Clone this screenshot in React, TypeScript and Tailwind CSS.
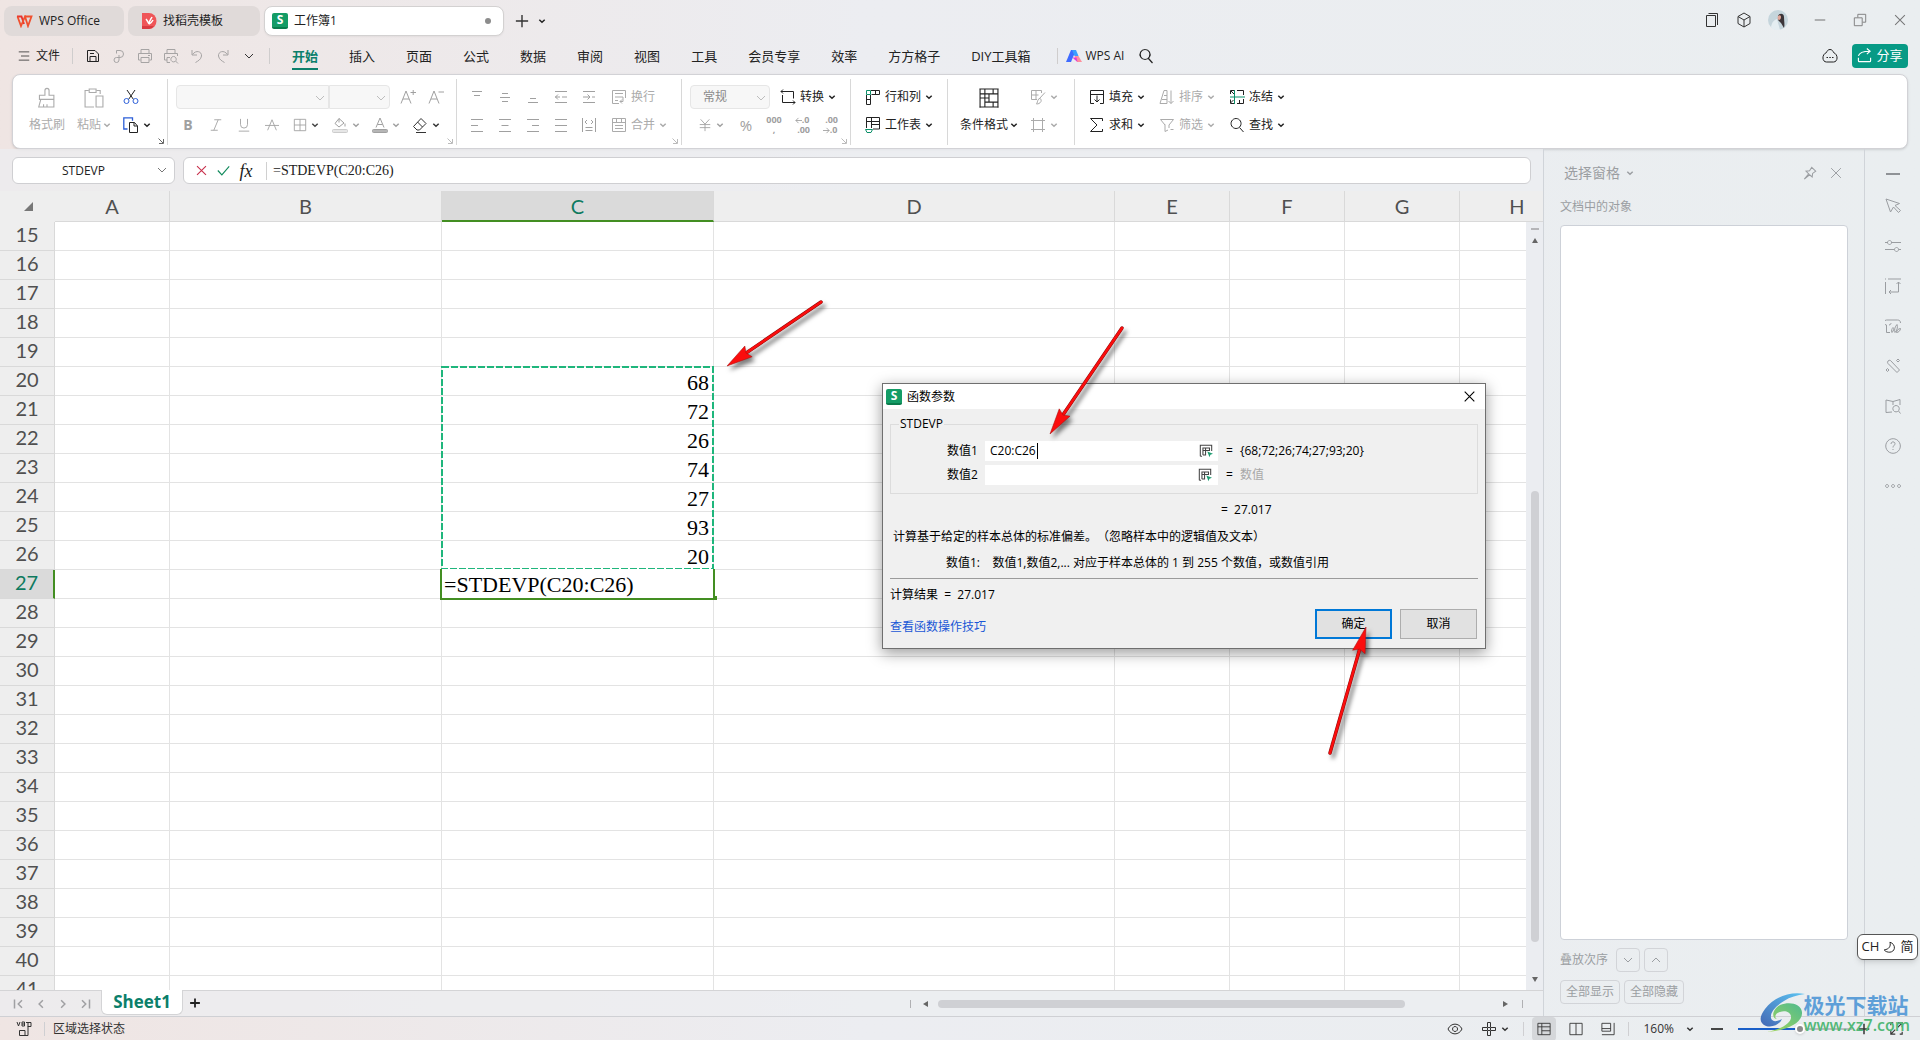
import { useState, type ReactNode } from "react";
import { clsx } from "clsx";

interface IconProps {
  d: string;
  size?: number;
  className?: string;
  width?: number;
  children?: ReactNode;
}

const Icon = ({ d, size = 16, className, width = 1, children }: IconProps) => (
  <svg
    width={size}
    height={size}
    viewBox="0 0 16 16"
    fill="none"
    stroke="currentColor"
    strokeWidth={width}
    className={clsx("shrink-0", className)}
    aria-hidden="true"
  >
    <path d={d} />
    {children}
  </svg>
);

const Caret = ({ className }: { className?: string }) => (
  <svg
    width="8"
    height="8"
    viewBox="0 0 8 8"
    fill="none"
    stroke="currentColor"
    strokeWidth="1.5"
    className={clsx("shrink-0", className)}
    aria-hidden="true"
  >
    <path d="M1.3 2.8 4 5.3l2.7-2.5" />
  </svg>
);

const Chevron = ({ className }: { className?: string }) => (
  <svg
    width="10"
    height="10"
    viewBox="0 0 10 10"
    fill="none"
    stroke="currentColor"
    className={clsx("shrink-0", className)}
    aria-hidden="true"
  >
    <path d="M1 3l4 4 4-4" />
  </svg>
);

const SheetLogo = () => (
  <span className="flex h-4 w-4 shrink-0 items-center justify-center rounded-xs border-b-2 border-[#0a7c4c] bg-[#149c66] text-xs leading-none font-bold text-white">
    S
  </span>
);

const Launcher = ({ dark }: { dark?: boolean }) => (
  <svg
    width="6"
    height="6"
    viewBox="0 0 6 6"
    fill="none"
    stroke="currentColor"
    className={clsx("absolute right-1 bottom-1", dark ? "text-[#666]" : "text-[#bbb]")}
    aria-hidden="true"
  >
    <path d="M.5.5 5 5M5.5 1v4.500H1" />
  </svg>
);

const paths = {
  save: "M2.500 2.500v11h11V6L10 2.500zM5 13.500V8.500h6v5M5 5.500h4",
  link: "M5.500 5.500v-3h3.500a3.500 3.500 0 0 1 0 7H5.500a2.500 2.500 0 1 0 2.500 2.500V7",
  print: "M4 5.500v-4h8v4M3.500 12h-2V5.500h13V12h-2M4 9.500h8v5H4zM11 7.500h2",
  preview: "M4 5.500v-4h8v4M4 12H1.500V5.500h13V8M7 14.500H4v-5h3M10.500 8.500a2.700 2.700 0 1 0 .1 0M12.500 13l2.500 2.500",
  undo: "M3 2v5h5M3.500 6.500C7 1.500 13 3.500 12.500 8 12 11.500 9 13 6.500 14.500",
  redo: "M13 2v5H8M12.500 6.500C9 1.500 3 3.500 3.500 8 4 11.500 7 13 9.500 14.500",
  search: "M7 1.500a5 5 0 1 0 .1 0M10.500 10.500l4 4.500",
  alignTop: "M3 2.500h10M5 6.500h6",
  alignMid: "M5 4.500h6M3 8.500h10M5 12.500h6",
  alignBottom: "M5 9.500h6M3 13.500h10",
  outdent: "M2 2.500h12M2 13.500h12M2 8h5M9 8h5M5 5.500 2.500 8 5 10.500",
  indent: "M2 2.500h12M2 13.500h12M2 8h7M11 8h3M6.500 5.500 9 8l-2.500 2.500",
  left: "M2 2.500h12M2 8.500h7M2 14.500h12",
  center: "M2 2.500h12M4.500 8.500h7M2 14.500h12",
  right: "M2 2.500h12M7 8.500h7M2 14.500h12",
  justify: "M2 2.500h12M2 8.500h12M2 14.500h12",
  spread: "M1.500 1v14M14.500 1v14M4.500 10.500h7M4.500 13.500h7M6 3 4 5l2 2M10 3l2 2-2 2",
  wrap: "M14.500 9V1.500h-13v13H8M4 4.500h8M4 8h8v4.500H9M11 10.500l-2 2 2 2M4 11.500h3",
  merge: "M1.500 1.500h13v13h-13zM1.500 5.500h13M5.500 1.500v4M10.500 1.500v4M4 8.500h8M4 11.500h8",
  convert: "M3 .5 1 2.500l2 2M1 2.500h12.500v7M2.500 6v7.500H15M13 11.500l2 2-2 2",
  fill: "M5 14.500H1.500v-13h13v13H11M1.500 5.500h13M8 6.500V13M5.500 10.500 8 13l2.500-2.500",
  sum: "M13.500 4V1.500h-12L8 8l-6.500 6.500h12V12",
  sort: "M1 14.500h7V1.500H5zM3 10.500h5M5 6.500h3M12 1.500v13M9.500 12l2.500 2.500 2.500-2.500",
  filter: "M1.500 2.500h13L10 8v3M6 7.500v7l3-1.500M1.500 2.500 6 8M11.500 12.500h3",
  frame: "M3.500 1v14M12.500 1v14M1 3.500h14M1 12.500h14",
  condition: "M1 1.500h14M1.500 1v14M14.500 1v14M1 14.500h14M5 1.500v13M11 1.500v3.500M11 11v3.500M1.500 5H11M5 11h9.500M8 5v6M11 5h3.500M1.500 8H8",
  border: "M1.500 1.500h13v13h-13zM8 1.500v13M1.500 8h13",
  eraser: "M9 1.500 14 6.500 7.500 13H5L1.500 9.500zM5.500 5l5 5M4 15.500h10",
};

const Sep = ({ className }: { className?: string }) => (
  <span className={clsx("block h-4 w-px shrink-0 bg-[#cfcdcd]", className)} />
);

const IconButton = ({ label, children, className }: { label: string; children: ReactNode; className?: string }) => (
  <button type="button" aria-label={label} className={clsx("flex h-6 items-center justify-center", className)}>
    {children}
  </button>
);

function TitleBar() {
  return (
    <header className="flex h-10 shrink-0 items-end gap-1 pb-1 pl-1 text-xs">
      <button type="button" className="flex h-[30px] w-[120px] items-center gap-1.5 rounded-lg bg-[#e0dad9] pl-3">
        <svg width="17" height="13" viewBox="0 0 17 13" fill="none" aria-hidden="true">
          <path d="M1 1.500h4.500L8 9" stroke="#e8322f" strokeWidth="1.800" />
          <path d="M1.500 1.500 5 11l4-9.500L12 11l3.500-9.500H8.500" stroke="#f0502e" strokeWidth="1.800" />
        </svg>
        WPS Office
      </button>
      <button type="button" className="flex h-[30px] w-[132px] items-center gap-1.5 rounded-lg bg-[#e0dad9] pl-3.5">
        <svg width="15" height="16" viewBox="0 0 15 16" aria-hidden="true">
          <path d="M0 0h7a7.500 8 0 0 1 0 16H0z" fill="#ef5558" />
          <path d="M0 13h12a7 7 0 0 1-5 3H0z" fill="#d93a40" />
          <path d="M4 6c1 1 2 3 3 5 0-3 2-5 3-7M7 11c2-1 3-2 4-4" stroke="#fff" strokeWidth="1.500" fill="none" />
        </svg>
        找稻壳模板
      </button>
      <button
        type="button"
        className="flex h-[30px] w-60 items-center gap-1.5 rounded-lg border border-[#d3d1d1] bg-white pr-3 pl-[7px] shadow-xs"
      >
        <SheetLogo />
        <span className="flex-1 text-left">工作簿1</span>
        <span className="h-1.5 w-1.5 rounded-full bg-[#8c8c8c]" />
      </button>
      <div className="mb-[3px] ml-1 flex gap-1">
        <IconButton label="新建" className="w-5">
          <Icon size={14} width={1.6} d="M8 1v14M1 8h14" className="text-[#333]" />
        </IconButton>
        <IconButton label="更多标签" className="w-3">
          <Caret />
        </IconButton>
      </div>
      <div className="mb-1 ml-auto flex text-[#333]">
        <IconButton label="窗口" className="w-8">
          <Icon d="M2.500 3.500h9v11h-9zM4.500 1.500h9V13" />
        </IconButton>
        <IconButton label="应用" className="w-8">
          <Icon d="M8 1 14 4.500v7L8 15l-6-3.500v-7zM2 4.500 8 8l6-3.500M8 8v7" />
        </IconButton>
        <IconButton label="账户" className="w-9">
          <svg width="20" height="20" viewBox="0 0 20 20" aria-hidden="true">
            <circle cx="10" cy="10" r="10" fill="#c5d5dc" />
            <path d="M3 17c1-5 3-7 6-8l3 11H8c-2 0-4-1-5-3z" fill="#e4eef2" />
            <path d="M10 6c1-3 6-3 6 1 0 4 1 8 0 11l-3-5-3-3z" fill="#3b3438" />
            <path d="M10 6c1-1 3-1 3 1s-1 3-2 3-2-2-1-4z" fill="#dfa79a" />
          </svg>
        </IconButton>
        <IconButton label="最小化" className="w-12 text-[#777]">
          <Icon size={12} d="M1 8h14" width={1.4} />
        </IconButton>
        <IconButton label="还原" className="w-8 text-[#777]">
          <Icon size={14} d="M1.500 5.500h9v9h-9zM5.500 5V1.500h9v9H11" />
        </IconButton>
        <IconButton label="关闭" className="ml-1 w-10 text-[#777]">
          <Icon size={12} d="M1.500 1.500l13 13M14.500 1.500l-13 13" width={1.4} />
        </IconButton>
      </div>
    </header>
  );
}

const menus = ["开始", "插入", "页面", "公式", "数据", "审阅", "视图", "工具", "会员专享", "效率", "方方格子", "DIY工具箱"];

const quickTools: { label: string; d: string }[] = [
  { label: "保存", d: paths.save },
  { label: "输出", d: paths.link },
  { label: "打印", d: paths.print },
  { label: "打印预览", d: paths.preview },
  { label: "撤销", d: paths.undo },
  { label: "恢复", d: paths.redo },
];

function MenuBar() {
  const [active, setActive] = useState("开始");

  return (
    <nav className="flex h-[34px] shrink-0 items-center pr-3 pb-[3px] pl-[18px]">
      <button type="button" className="flex items-center gap-1.5 text-xs">
        <Icon size={12} d="M1 2.500h14M4 8h11M1 13.500h14" />
        文件
      </button>
      <Sep className="ml-3" />
      <div className="ml-[7px] flex">
        {quickTools.map((tool, index) => (
          <IconButton key={tool.label} label={tool.label} className={clsx("w-[26px]", index > 0 && "text-[#a6a4a4]")}>
            <Icon d={tool.d} />
          </IconButton>
        ))}
        <IconButton label="自定义" className="w-[26px] text-[#333]">
          <Chevron />
        </IconButton>
      </div>
      <Sep className="ml-[7px]" />
      <div className="ml-[22px] flex gap-[31px] text-[13px]">
        {menus.map((menu) => (
          <button
            key={menu}
            type="button"
            onClick={() => setActive(menu)}
            className={clsx(
              "h-7 border-t-2 border-b-2 border-t-transparent leading-5 whitespace-nowrap",
              active === menu ? "border-b-[#0b7f6b] font-bold text-[#0b7f6b]" : "border-b-transparent",
            )}
          >
            {menu}
          </button>
        ))}
      </div>
      <Sep className="ml-[26px]" />
      <button type="button" className="ml-2 flex items-center gap-1 text-xs">
        <svg width="16" height="12" viewBox="0 0 16 12" aria-hidden="true">
          <path d="M5 0h5L5 12H0z" fill="#3f6bff" />
          <path d="M6 0h4l2.500 6H8.500z" fill="#3b9dff" />
          <path d="M8.500 6h4l3.500 6h-5z" fill="#ff8f9c" />
          <path d="M6.500 7.500h4l1 4.500-3-2.500z" fill="#e23bd8" />
        </svg>
        WPS AI
      </button>
      <IconButton label="搜索" className="ml-3 w-5">
        <Icon d={paths.search} width={1.2} />
      </IconButton>
      <IconButton label="云同步" className="mr-2 ml-auto w-7">
        <Icon d="M8 1.500c2 0 3 1.500 3.500 3C16.500 6.500 16 14 11.500 14h-7C0 14-.5 6.500 4.500 4.500 5 3 6 1.500 8 1.500zM4.500 9.500h1.500M7.300 9.500h1.500M10 9.500h1.500" />
      </IconButton>
      <button type="button" className="flex h-6 w-14 items-center justify-center gap-1 rounded bg-[#079a85] text-[13px] text-white">
        <Icon size={15} d="M1.500 10.500v3c0 .6.400 1 1 1h11c.6 0 1-.4 1-1v-3M1.500 8.500c1-4 5-5 12-5M10.500.5l3.500 3-3.500 3" width={1.2} />
        分享
      </button>
    </nav>
  );
}

const Group = ({ children, className }: { children: ReactNode; className?: string }) => (
  <div className="relative h-full pt-1">
    <div className={clsx("flex h-[66px] border-r border-[#d8d8d8] pt-1.5 text-xs", className)}>{children}</div>
  </div>
);

interface ToolProps {
  icon: ReactNode;
  text?: string;
  off?: boolean;
  caret?: boolean;
}

const Tool = ({ icon, text, off, caret = true }: ToolProps) => (
  <button
    type="button"
    aria-label={text ?? "工具"}
    className={clsx("flex h-6 items-center gap-1 whitespace-nowrap", off && "text-[#ababab]")}
  >
    {icon}
    {text}
    {caret && <Caret />}
  </button>
);

const DropBox = ({ label, value, className }: { label: string; value?: string; className?: string }) => (
  <label className={clsx("relative flex h-6", className)}>
    <select
      aria-label={label}
      className="w-full appearance-none border border-[#e6e6e6] bg-[#f7f7f7] pl-3 text-xs text-[#8a8a8a] [border-radius:inherit]"
    >
      <option>{value ?? ""}</option>
    </select>
    <Chevron className="absolute top-2 right-1 text-[#bdbdbd]" />
  </label>
);

function Ribbon() {
  return (
    <section className="mx-3 h-[75px] shrink-0 rounded-lg border border-[#d2d2d6] bg-white shadow-sm">
      <div className="flex h-full overflow-hidden">
        <Group className="w-[155px] gap-3 pl-4">
          <button type="button" className="flex w-9 flex-col items-center gap-2 pt-0.5 text-[#ababab]">
            <Icon size={22} width={0.8} d="M6.500 6V2.500a1.500 1.500 0 0 1 3 0V6h3.500v3H2.500V6zM3.500 9 2 14.500h11V9M5.500 14.500v-2M8 14.500v-2" />
            <span className="leading-4 whitespace-nowrap">格式刷</span>
          </button>
          <button type="button" className="flex flex-col items-center gap-2 pt-0.5 text-[#ababab]">
            <Icon size={22} width={0.8} d="M4 2.500H1.500v12H8M10 2.500h2.500V5M4.500 1.500h5v2.500h-5zM9.500 6.500h5v8h-5z" />
            <span className="flex items-center gap-0.5 leading-4 whitespace-nowrap">
              粘贴
              <Caret />
            </span>
          </button>
          <div className="flex flex-col gap-1">
            <IconButton label="剪切" className="w-4">
              <Icon d="M4 1l6.500 9.500M12 1 5.500 10.500">
                <circle cx="3.500" cy="12" r="2.500" stroke="#2d5fd8" />
                <circle cx="12.500" cy="12" r="2.500" stroke="#2d5fd8" />
              </Icon>
            </IconButton>
            <IconButton label="复制" className="gap-1">
              <Icon d="M6.500 5.500h5l3 3.500v6.500h-8zM11 5.500V9h3.500">
                <path d="M4.500 12H.8V.8h8.700v3" stroke="#2d5fd8" strokeWidth="1.300" />
              </Icon>
              <Caret />
            </IconButton>
          </div>
          <Launcher dark />
        </Group>

        <Group className="w-[289px] pl-1.5">
          <div className="flex flex-col gap-1">
            <div className="flex">
              <DropBox label="字体" className="ml-0.5 w-[153px] rounded-l" />
              <DropBox label="字号" className="w-[61px] rounded-r" />
              <IconButton label="增大字号" className="ml-1 w-7 text-[#a0a0a0]">
                <Icon d="M1 14.500 6 2l5 12.500M3 10h6M10.500 3.500H16M13.200 1v5" />
              </IconButton>
              <IconButton label="减小字号" className="w-7 text-[#a0a0a0]">
                <Icon d="M1 14.500 6 2l5 12.500M3 10h6M10.500 3H16" />
              </IconButton>
            </div>
            <div className="flex text-[#a0a0a0]">
              <IconButton label="加粗" className="w-7 text-sm font-bold">B</IconButton>
              <IconButton label="倾斜" className="w-7">
                <Icon size={14} d="M6 2h8M2 14h8M10.500 2l-5 12" />
              </IconButton>
              <IconButton label="下划线" className="w-7">
                <Icon size={14} d="M4 1v6.500a4 4 0 0 0 8 0V1M2 15h12" />
              </IconButton>
              <IconButton label="删除线" className="w-7">
                <Icon size={14} d="M3 14 8 2l5 12M0 8.500h16" />
              </IconButton>
              <IconButton label="边框" className="w-10 gap-1">
                <Icon size={14} d={paths.border} />
                <Caret className="text-[#444]" />
              </IconButton>
              <IconButton label="填充颜色" className="w-10 gap-1">
                <Icon d="M7 1.500 12 6 7 10 3 6.500zM7 1.500v4M13 6.500v3">
                  <rect x=".5" y="12.500" width="15" height="3" rx="1" fill="#e6e6e6" stroke="#ccc" />
                </Icon>
                <Caret />
              </IconButton>
              <IconButton label="字体颜色" className="w-10 gap-1">
                <Icon d="M4 10.500 8 1l4 9.500M5.500 7.500h5">
                  <rect x=".5" y="12.500" width="15" height="3" rx="1" fill="#b5b5b5" />
                </Icon>
                <Caret />
              </IconButton>
              <IconButton label="清除" className="w-10 gap-1 text-[#333]">
                <Icon d={paths.eraser} />
                <Caret />
              </IconButton>
            </div>
          </div>
          <Launcher />
        </Group>

        <Group className="w-[225px] pl-1.5 text-[#a0a0a0]">
          <div className="flex flex-col gap-1">
            <div className="flex">
              {[paths.alignTop, paths.alignMid, paths.alignBottom, paths.outdent, paths.indent].map((d, index) => (
                <IconButton key={d} label={["顶端对齐", "垂直居中", "底端对齐", "减少缩进", "增加缩进"][index]} className="w-7">
                  <Icon d={d} />
                </IconButton>
              ))}
              <span className="ml-2">
                <Tool off caret={false} icon={<Icon d={paths.wrap} />} text="换行" />
              </span>
            </div>
            <div className="flex">
              {[paths.left, paths.center, paths.right, paths.justify, paths.spread].map((d, index) => (
                <IconButton key={d} label={["左对齐", "居中", "右对齐", "两端对齐", "分散对齐"][index]} className="w-7">
                  <Icon d={d} />
                </IconButton>
              ))}
              <span className="ml-2">
                <Tool off icon={<Icon d={paths.merge} />} text="合并" />
              </span>
            </div>
          </div>
          <Launcher />
        </Group>

        <Group className="w-[169px] pl-2">
          <div className="flex flex-col gap-1">
            <div className="flex gap-2.5">
              <DropBox label="数字格式" value="常规" className="w-20 rounded" />
              <Tool icon={<Icon d={paths.convert} />} text="转换" />
            </div>
            <div className="flex text-[#a0a0a0]">
              <IconButton label="货币" className="w-[42px] gap-1">
                <Icon size={14} d="M3 1.500 8 7l5-5.500M8 7v8M2 7.500h12M2 11h12" />
                <Caret />
              </IconButton>
              <IconButton label="百分比" className="w-7 text-[15px]">%</IconButton>
              <IconButton label="千位分隔" className="w-7 flex-col text-[9px] leading-[10px] font-bold">
                <span>000</span>
                <span>,</span>
              </IconButton>
              <IconButton label="增加小数位" className="w-7 flex-col text-[9px] leading-[10px] font-bold">
                <span className="flex items-center">
                  <Icon size={7} width={2} d="M16 8H2M8 2 2 8l6 6" />
                  .0
                </span>
                <span className="self-end pr-1.5">.00</span>
              </IconButton>
              <IconButton label="减少小数位" className="w-7 flex-col text-[9px] leading-[10px] font-bold">
                <span className="self-end pr-1.5">.00</span>
                <span className="flex items-center">
                  <Icon size={7} width={2} d="M0 8h14M8 2l6 6-6 6" />
                  .0
                </span>
              </IconButton>
            </div>
          </div>
          <Launcher />
        </Group>

        <Group className="w-[97px] flex-col gap-1 pl-3.5">
          <Tool
            icon={
              <Icon d="M6 1.500h8.500v4h-8M10.500 1.500v4M1.500 6v9.500h4V6M1.500 10.500h4">
                <path d="M1.500 1.500h4v4h-4z" stroke="#0b8f68" />
              </Icon>
            }
            text="行和列"
          />
          <Tool
            icon={
              <Icon d="M1.500 11V.5h13v11.500H8M1.500 4.500h13M6.500 .5V11M6.500 7.500h8">
                <path d="M.5 12.500h7l-1.500 3h-4z" stroke="#0b8f68" />
              </Icon>
            }
            text="工作表"
          />
        </Group>

        <Group className="w-[127px] gap-3 pl-3">
          <button type="button" className="flex flex-col items-center gap-2 pt-0.5">
            <Icon size={22} width={0.8} d={paths.condition} />
            <span className="flex items-center gap-0.5 leading-4 whitespace-nowrap">
              条件格式
              <Caret />
            </span>
          </button>
          <div className="flex flex-col gap-1">
            <Tool off icon={<Icon d="M7 10.500H1.500v-9h10V4M6 1.500v9M1.500 6h7M15 3.500 9.500 9.500M9 9.500c2 0 2.500 1 2 3-1 2-3 2.500-4.500 2.500 1-1 .5-3 2.500-5.500z" />} />
            <Tool off icon={<Icon d={paths.frame} />} />
          </div>
        </Group>

        <div className="flex gap-3.5 pt-2.5 pl-3.5 text-xs">
          <div className="flex flex-col gap-1">
            <Tool icon={<Icon d={paths.fill} />} text="填充" />
            <Tool icon={<Icon d={paths.sum} />} text="求和" />
          </div>
          <div className="flex flex-col gap-1">
            <Tool off icon={<Icon d={paths.sort} />} text="排序" />
            <Tool off icon={<Icon d={paths.filter} />} text="筛选" />
          </div>
          <div className="flex flex-col gap-1">
            <Tool
              icon={
                <Icon d="M1.500 5V1.500H5M8 1.500h6.500V6M1.500 10.500v4H5M8 14.500h6.500V10M2 2l3 3M1.500 14l3-3M10.500 14.500V11">
                  <path d="M5.500 1v14M1 8h15" stroke="#0b8f68" />
                </Icon>
              }
              text="冻结"
            />
            <Tool icon={<Icon d={paths.search} />} text="查找" />
          </div>
        </div>
      </div>
    </section>
  );
}

function FormulaBar() {
  return (
    <div className="flex h-[42px] shrink-0 gap-2 pt-2 pr-3 pb-[7px] pl-3">
      <label className="relative flex w-[163px]">
        <input
          aria-label="名称框"
          defaultValue="STDEVP"
          className="w-full rounded-md border border-[#cfcfd2] bg-white pr-5 text-center text-xs outline-none"
        />
        <Chevron className="absolute top-2 right-2 text-[#777]" />
      </label>
      <div className="flex flex-1 items-center rounded-md border border-[#cfcfd2] bg-white pl-1.5">
        <IconButton label="取消输入" className="w-[22px]">
          <Icon size={11} d="M1.500 1.500l13 13M14.500 1.500l-13 13" width={1.6} className="text-[#c8304c]" />
        </IconButton>
        <IconButton label="确认输入" className="w-[22px]">
          <Icon size={13} d="M1 8l5 5.500L15 3" width={1.4} className="text-[#118a5c]" />
        </IconButton>
        <IconButton label="插入函数" className="w-6 font-[Liberation_Serif,serif] text-lg italic">
          fx
        </IconButton>
        <span className="ml-2 h-[18px] w-px bg-[#d0d0d0]" />
        <input
          aria-label="编辑栏"
          defaultValue="=STDEVP(C20:C26)"
          className="ml-1.5 flex-1 bg-transparent font-[Liberation_Serif,serif] text-sm outline-none"
        />
      </div>
    </div>
  );
}

const columns = ["A", "B", "C", "D", "E", "F", "G", "H"];
const rows = Array.from({ length: 27 }, (_, i) => i + 15);
const cells: Record<number, string> = { 20: "68", 21: "72", 22: "26", 23: "74", 24: "27", 25: "93", 26: "20" };

function Grid() {
  return (
    <div className="flex min-h-0 flex-1 border-b border-[#d4d4d6] bg-[#eeeeee]">
      <div className="min-w-0 flex-1 overflow-hidden bg-white">
        <table className="w-[1575px] table-fixed border-separate border-spacing-0">
          <colgroup>
            <col className="w-[55px]" />
            <col className="w-[115px]" />
            <col className="w-[272px]" />
            <col className="w-[272px]" />
            <col className="w-[401px]" />
            <col className="w-[115px]" />
            <col className="w-[115px]" />
            <col className="w-[115px]" />
            <col className="w-[115px]" />
          </colgroup>
          <thead className="font-[Lato,sans-serif] text-xl text-[#505050]">
            <tr className="h-[31px]">
              <th className="bg-[#eeeeee] p-0">
                <svg width="9" height="9" viewBox="0 0 9 9" className="ml-6" aria-hidden="true">
                  <path d="M9 0v9H0z" fill="#777" />
                </svg>
              </th>
              {columns.map((name) => (
                <th
                  key={name}
                  className={clsx(
                    "border-r p-0 leading-7 font-normal",
                    name === "C"
                      ? "border-r-[#d9d9d9] border-b-2 border-b-[#438e22] bg-[#dadada] text-[#0e7a5f]"
                      : "border-b border-[#d9d9d9] bg-[#eeeeee]",
                  )}
                >
                  {name}
                </th>
              ))}
            </tr>
          </thead>
          <tbody>
            {rows.map((row) => (
              <tr key={row} className="h-[29px]">
                <th
                  className={clsx(
                    "border-b border-[#d9d9d9] p-0 pb-1 font-[Lato,sans-serif] text-xl leading-6 font-normal",
                    row === 27
                      ? "border-r-2 border-r-[#438e22] bg-[#dadada] text-[#0e7a5f]"
                      : "border-r bg-[#eeeeee] text-[#505050]",
                  )}
                >
                  {row}
                </th>
                {columns.map((name) => (
                  <td
                    key={name}
                    className="relative border-r border-b border-[#e3e3e3] p-0 font-[Liberation_Serif,serif] text-[22px] leading-6 text-black"
                  >
                    {name === "C" && cells[row] && <div className="pt-1 pr-1 text-right">{cells[row]}</div>}
                    {name === "C" && row === 20 && (
                      <svg width="274" height="204" className="absolute -top-px -left-px z-10" fill="none" aria-hidden="true">
                        <rect x="1" y="1" width="271" height="202" stroke="#1fb67c" strokeWidth="2" strokeDasharray="7 2" />
                      </svg>
                    )}
                    {name === "C" && row === 27 && (
                      <div className="absolute -inset-x-0.5 -top-px -bottom-0.5 z-10 border-2 border-t-0 border-[#438e22] bg-white pt-1 pl-0.5">
                        =STDEVP(C20:C26)
                        <span className="absolute -right-1 -bottom-0.5 h-1 w-1 bg-[#438e22]" />
                      </div>
                    )}
                  </td>
                ))}
              </tr>
            ))}
          </tbody>
        </table>
      </div>
      <div className="flex w-[17px] flex-col">
        <div className="h-[31px] border-b border-[#d9d9d9]" />
        <div className="flex flex-1 flex-col items-center bg-[#ebedf1] py-1.5">
          <span className="h-0.5 w-2 bg-[#b5b5b8]" />
          <svg width="6" height="5" viewBox="0 0 6 5" className="mt-2" aria-hidden="true">
            <path d="M3 0l3 5H0z" fill="#666" />
          </svg>
          <span className="flex-[247]" />
          <span className="w-2 flex-[450] rounded-full bg-[#cfd0d4]" />
          <span className="flex-[35]" />
          <svg width="6" height="5" viewBox="0 0 6 5" className="mb-0.5" aria-hidden="true">
            <path d="M0 0h6L3 5z" fill="#666" />
          </svg>
        </div>
      </div>
    </div>
  );
}

function SheetTabs() {
  return (
    <div className="flex h-[25px] shrink-0 items-start">
      <div className="flex h-[25px] items-center gap-1 pl-2.5 text-[#a0a0a3]">
        <IconButton label="首张工作表" className="w-[18px]">
          <Icon size={12} width={2} d="M2 2v12M12 3 7 8l5 5" />
        </IconButton>
        <IconButton label="上一张" className="w-[18px]">
          <Icon size={12} width={2} d="M10.500 3l-5 5 5 5" />
        </IconButton>
        <IconButton label="下一张" className="w-[18px]">
          <Icon size={12} width={2} d="M5.500 3l5 5-5 5" />
        </IconButton>
        <IconButton label="末张工作表" className="w-[18px]">
          <Icon size={12} width={2} d="M14 2v12M4 3l5 5-5 5" />
        </IconButton>
      </div>
      <button
        type="button"
        className="-mt-px ml-[7px] h-[25px] w-[82px] rounded-b-md border border-t-0 border-[#d4d4d6] bg-white text-[17px] leading-6 font-bold text-[#0b7f6b]"
      >
        Sheet1
      </button>
      <IconButton label="新建工作表" className="ml-0.5 w-5">
        <Icon size={12} width={2.4} d="M8 2v12M1.500 8h13" className="text-[#222]" />
      </IconButton>
      <div className="ml-auto flex h-[25px] w-[41%] items-center">
        <span className="h-2 w-px bg-[#b0b0b3]" />
        <svg width="5" height="6" viewBox="0 0 5 6" className="ml-3" aria-hidden="true">
          <path d="M5 0v6L0 3z" fill="#666" />
        </svg>
        <span className="ml-2.5 h-2 flex-[467] rounded-full bg-[#cfd0d4]" />
        <span className="flex-[98]" />
        <svg width="5" height="6" viewBox="0 0 5 6" aria-hidden="true">
          <path d="M0 0v6l5-3z" fill="#666" />
        </svg>
        <span className="mr-5 ml-3.5 h-2 w-px bg-[#b0b0b3]" />
      </div>
    </div>
  );
}

function SelectionPane() {
  return (
    <aside className="flex w-[321px] shrink-0 flex-col border-l border-[#d0d4d9] px-4 text-xs text-[#9b9ea2]">
      <div className="flex items-center pt-3">
        <button type="button" className="ml-1 flex items-center gap-1.5 text-sm leading-6">
          选择窗格
          <Caret />
        </button>
        <IconButton label="固定" className="ml-auto w-7">
          <Icon size={14} width={1.2} d="M10 1.500 14.500 6 11 8.500l-.5 4-3-2.500-6 5 5-6-3-3 4-.5z" />
        </IconButton>
        <IconButton label="关闭窗格" className="w-6">
          <Icon size={12} width={1.3} d="M1.500 1.500l13 13M14.500 1.500l-13 13" />
        </IconButton>
      </div>
      <p className="mt-3 leading-5">文档中的对象</p>
      <div className="mt-2 flex-1 rounded border border-[#cdd1d8] bg-white" />
      <div className="mt-2 flex items-center gap-1">
        <span className="mr-1">叠放次序</span>
        <IconButton label="下移一层" className="w-6 rounded border border-[#d2d4d8]">
          <Chevron />
        </IconButton>
        <IconButton label="上移一层" className="w-6 rounded border border-[#d2d4d8]">
          <Chevron className="rotate-180" />
        </IconButton>
      </div>
      <div className="mt-2 mb-3 flex gap-1">
        <button type="button" className="h-6 w-15 rounded border border-[#d2d4d8]">
          全部显示
        </button>
        <button type="button" className="h-6 w-15 rounded border border-[#d2d4d8]">
          全部隐藏
        </button>
      </div>
    </aside>
  );
}

const sideTools: { label: string; d: string }[] = [
  { label: "选择", d: "M1 1l13.500 4.500L10 7.500l5.500 5-2 2-5-5.500L5.500 14z" },
  { label: "属性", d: "M0 4.500h3M6 4.500h10M4.500 2.500a2 2 0 1 0 .1 0M0 11.500h9.500M13.500 11.500H16M11.500 9.500a2 2 0 1 0 .1 0" },
  { label: "分析", d: "M.5 4v12M3 1h13M.5.5v1M13.500 4v10H4M11.500 6l2-2 2 2M6 12l-2 2 2 2" },
  { label: "模板", d: "M5 14.500H1.500V7a2.500 2.500 0 0 1 0-5h11c2 0 3 1 3 3M4 7c2 0 2-2 2-2M7 14.500c-1-2 0-4 1-5 1 1 1 3-1 5zM10 14.500c-1-3 0-6 2-8 1 3 0 6-2 8zM11.500 14.500c0-2 2-4 4-4 0 2-2 4-4 4z" },
  { label: "工具", d: "M3 5.500 12 14.500l2.500-2.500L5.500 2.500A2 2 0 0 0 3 5.500zM13 1l1.500 1.500L13 4l-1.500-1.500zM2.500 10.500 4 12l-1.500 1.500L1 12z" },
  { label: "资源", d: "M7 14l-6 .5V2l7 1.500L15 1.500V7M8 3.500V7M11 7.500a3.200 3.200 0 1 0 .1 0M13.500 13l2 2.500" },
  { label: "帮助", d: "M8 .7a7.300 7.300 0 1 0 .1 0M6 6c0-3 4-2.500 4-.5C10 7.500 8 7.500 8 9.500M8 11v1" },
  { label: "更多", d: "M2 6.500a1.500 1.500 0 1 0 .1 0M8 6.500a1.500 1.500 0 1 0 .1 0M14 6.500a1.500 1.500 0 1 0 .1 0" },
];

const SideBar = () => (
  <aside className="flex w-14 shrink-0 flex-col items-center gap-4 border-l border-[#d0d4d9] pt-6 text-[#9a9da1]">
    <span className="h-0.5 w-3.5 bg-[#8f9296]" />
    <div className="-mt-px flex flex-col gap-4 pt-1">
      {sideTools.map((tool) => (
        <IconButton key={tool.label} label={tool.label}>
          <Icon d={tool.d} />
        </IconButton>
      ))}
    </div>
  </aside>
);

function StatusBar() {
  return (
    <footer className="flex h-6 shrink-0 items-center border-t border-[#cfd0d4] text-xs text-[#333]">
      <IconButton label="宏" className="ml-4 w-4">
        <Icon d="M1 1l1.500 4L4 1M6 1v4h2.500V1zM6 3h2.500M10 1.500h5v4h-3v-4M12 5v9.500M3.500 14.500H12M3.500 14.500V9.500H9v5" />
      </IconButton>
      <span className="ml-3 h-3.5 w-px bg-[#cfcfd2]" />
      <span className="ml-2">区域选择状态</span>
      <IconButton label="护眼" className="ml-auto w-5">
        <Icon d="M1 8c3-6.500 11-6.500 14 0-3 6.500-11 6.500-14 0zM8 5.500a2.500 2.500 0 1 0 .1 0" />
      </IconButton>
      <IconButton label="十字光标" className="ml-4 gap-1">
        <Icon d="M6.500 6V1.500h3V6M6.500 10v4.500h3V10M6 6.500H1.500v3H6M10 6.500h4.500v3H10M6.500 6.500h3v3h-3z" />
        <Caret />
      </IconButton>
      <span className="ml-3.5 h-3.5 w-px bg-[#cfcfd2]" />
      <IconButton label="普通视图" className="ml-2 w-6 rounded bg-[#d5d7da]">
        <Icon size={14} d="M1 1.500h14v13H1zM1 5.500h14M5.500 1.500v13M5.500 10H15" />
      </IconButton>
      <IconButton label="分页预览" className="w-10">
        <Icon size={14} d="M1 1.500h14v13H1zM8 1.500v13" />
      </IconButton>
      <IconButton label="页面布局" className="w-6">
        <Icon size={14} d="M1 1.500h10v9H1zM15 1v13.500H1M1 7.500h10" />
      </IconButton>
      <span className="ml-2 h-3.5 w-px bg-[#cfcfd2]" />
      <button type="button" className="ml-3.5 flex items-center gap-3">
        160%
        <Caret />
      </button>
      <IconButton label="缩小" className="ml-4 w-3.5">
        <Icon size={12} width={2.4} d="M0 8h16" />
      </IconButton>
      <input
        type="range"
        aria-label="缩放"
        defaultValue={55}
        className="ml-3.5 h-0.5 w-[114px] appearance-none bg-linear-to-r from-[#1a5fc8] from-55% to-[#b9bcc2] to-55% [&::-webkit-slider-thumb]:h-2.5 [&::-webkit-slider-thumb]:w-2.5 [&::-webkit-slider-thumb]:appearance-none [&::-webkit-slider-thumb]:rounded-full [&::-webkit-slider-thumb]:border-2 [&::-webkit-slider-thumb]:border-white [&::-webkit-slider-thumb]:bg-[#8b8b8b] [&::-webkit-slider-thumb]:shadow"
      />
      <IconButton label="放大" className="ml-1 w-4">
        <Icon size={12} width={2} d="M8 1v14M1 8h14" />
      </IconButton>
      <IconButton label="全屏" className="mr-4 ml-4 w-4">
        <Icon size={13} width={1.4} d="M9.500 1H15v5.500M15 1 9.500 6.500M6.500 15H1V9.500M1 15l5.500-5.500M1 4V1h3M15 12v3h-3" />
      </IconButton>
    </footer>
  );
}

const PickerIcon = () => (
  <Icon size={14} width={1.2} d="M1.500 14V1.500h13V8M1.500 14h2M4.500 12.500v-8h7.500V8M4.500 7.500H12M7.500 4.500v8H4.500" className="text-[#444]">
    <path d="M9.500 8.500 16 11l-3 1.200L12 15z" fill="#1c9c70" stroke="none" />
  </Icon>
);

function FunctionDialog() {
  return (
    <div
      role="dialog"
      aria-label="函数参数"
      className="absolute top-[383px] left-[882px] z-20 flex w-[604px] flex-col border border-[#6f6f6f] bg-[#f0f0f0] text-xs text-black shadow-[0_4px_14px_rgba(0,0,0,0.4)] [text-spacing-trim:space-all]"
    >
      <div className="flex h-[25px] items-center gap-[5px] bg-white pr-2.5 pl-[3px]">
        <SheetLogo />
        <span className="flex-1">函数参数</span>
        <IconButton label="关闭" className="w-3">
          <Icon size={11} width={1.6} d="M1 1l14 14M15 1 1 15" />
        </IconButton>
      </div>
      <div className="px-[7px] pt-[7px]">
        <fieldset className="h-[78px] border border-[#dcdcdc] pl-14">
          <legend className="-ml-12 px-px leading-4">STDEVP</legend>
          <div className="-mt-[7px] flex flex-col gap-1 pt-4">
            <div className="flex h-5 items-center">
              <label htmlFor="value1" className="w-[38px]">
                数值1
              </label>
              <div className="flex h-5 w-[233px] items-center bg-white pr-[5px]">
                <input id="value1" defaultValue="C20:C26" className="w-[53px] border-r border-black pl-[5px] leading-4 outline-none" />
                <span className="flex-1" />
                <PickerIcon />
              </div>
              <span className="w-[22px] pl-2">=</span>
              <span>{"{68;72;26;74;27;93;20}"}</span>
            </div>
            <div className="flex h-5 items-center">
              <label htmlFor="value2" className="w-[38px]">
                数值2
              </label>
              <div className="flex h-5 w-[233px] items-center bg-white pr-1.5">
                <input id="value2" className="flex-1 pl-[5px] outline-none" />
                <PickerIcon />
              </div>
              <span className="w-[22px] pl-2">=</span>
              <span className="text-[#a8a8a8]">数值</span>
            </div>
          </div>
        </fieldset>
        <p className="mt-1.5 pl-[331px] leading-5 whitespace-pre">=  27.017</p>
        <p className="mt-[7px] pl-[3px] leading-5">计算基于给定的样本总体的标准偏差。（忽略样本中的逻辑值及文本）</p>
        <p className="mt-1.5 pl-14 leading-5 whitespace-pre">数值1:    数值1,数值2,... 对应于样本总体的 1 到 255 个数值，或数值引用</p>
        <hr className="mt-[5px] border-t border-[#9b9b9b]" />
        <p className="mt-1.5 leading-5 whitespace-pre">计算结果  =  27.017</p>
        <div className="flex pt-1 pr-px pb-[9px]">
          <a href="#tips" className="mt-2 leading-5 text-[#1a57d6]">
            查看函数操作技巧
          </a>
          <button type="button" className="ml-auto h-[30px] w-[77px] border-2 border-[#0078d7] bg-[#e1e1e1]">
            确定
          </button>
          <button type="button" className="ml-2 h-[30px] w-[77px] border border-[#adadad] bg-[#e1e1e1]">
            取消
          </button>
        </div>
      </div>
    </div>
  );
}

const arrows = [
  { tip: [727, 366], tail: [821, 302] },
  { tip: [1050, 434], tail: [1122, 328] },
  { tip: [1366, 627], tail: [1330, 753] },
];

const Arrows = () => (
  <svg
    width="1920"
    height="1040"
    className="pointer-events-none absolute top-0 left-0 z-30 drop-shadow-[3px_4px_2px_rgba(0,0,0,0.5)]"
    aria-hidden="true"
  >
    {arrows.map(({ tip, tail }) => {
      const dx = tail[0] - tip[0];
      const dy = tail[1] - tip[1];
      const angle = (Math.atan2(dy, dx) * 180) / Math.PI;
      return (
        <g key={tip[0]} transform={`translate(${tip[0]} ${tip[1]}) rotate(${angle})`}>
          <path d={`M22 0H${Math.hypot(dx, dy)}`} stroke="#8e0b0b" strokeWidth="3.500" strokeLinecap="round" />
          <path d={`M22 0H${Math.hypot(dx, dy)}`} stroke="#fb0d0d" strokeWidth="2.500" strokeLinecap="round" />
          <path d="M0 0l26-6.500-3 6.500 3 6.500z" fill="#fb0d0d" stroke="#a51010" strokeWidth=".5" />
        </g>
      );
    })}
  </svg>
);

const Watermark = () => (
  <div className="pointer-events-none absolute right-2.5 bottom-1.5 z-30 flex items-center">
    <svg width="46" height="42" viewBox="0 0 46 42" aria-hidden="true">
      <defs>
        <linearGradient id="blue" x1="1" y1="0" x2="0" y2="1">
          <stop offset="0" stopColor="#5cc4f2" />
          <stop offset="1" stopColor="#4468b4" />
        </linearGradient>
        <linearGradient id="green" x1="1" y1="0" x2="0" y2="1">
          <stop offset="0" stopColor="#4fba8e" />
          <stop offset="1" stopColor="#a4d65a" />
        </linearGradient>
      </defs>
      <path d="M45 2C30-1 14 5 5 17c-6 8-6 14 1 17 7 2 14-2 16-7-5 3-10 3-11-1-1-6 5-12 13-17 6-4 13-6 21-7z" fill="url(#blue)" />
      <path d="M20 13c10-4 21-1 22 7 1 12-18 19-35 20 14-3 25-9 24-16-1-4-6-6-11-4-5 1-6 6-3 7-5 0-6-9 3-14z" fill="url(#green)" />
    </svg>
    <div className="-ml-0.5 flex flex-col">
      <span className="text-[21px] leading-6 font-bold text-[#5e9fd8]">极光下载站</span>
      <span className="text-base leading-4 font-semibold text-[#52b877]">www.xz7.com</span>
    </div>
  </div>
);

export default function App() {
  return (
    <div className="relative flex h-screen flex-col overflow-hidden bg-linear-to-r from-[#efe5e3] via-[#ecedf1] via-45% to-[#eaeef0] font-['Open_Sans','Noto_Sans_CJK_SC',sans-serif] text-[#222]">
      <TitleBar />
      <MenuBar />
      <Ribbon />
      <main className="flex min-h-0 flex-1">
        <div className="flex min-w-0 flex-1 flex-col bg-[#edeef1]/70">
          <FormulaBar />
          <Grid />
          <SheetTabs />
        </div>
        <SelectionPane />
        <SideBar />
      </main>
      <StatusBar />
      <FunctionDialog />
      <Arrows />
      <div className="absolute right-0.5 bottom-20 z-30 flex h-[26px] w-[61px] items-center justify-center gap-1 rounded-md border border-[#555] bg-white text-[13px] shadow-md">
        CH
        <Icon size={13} width={1.2} d="M8.500 1.500c1.500 5-1 8.500-7 9.500 3 4 11.500 4 12.500-2 .5-3.500-2-6.500-5.500-7.500z" />
        简
      </div>
      <Watermark />
    </div>
  );
}
